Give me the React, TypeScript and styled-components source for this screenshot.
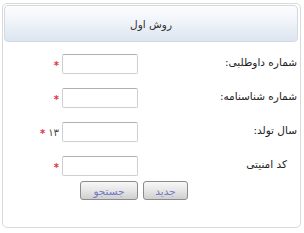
import React from 'react';
import styled, { createGlobalStyle } from 'styled-components';

const GlobalStyle = createGlobalStyle`
body {
    margin: 0;
    background: #ffffff;
    font-family: "DejaVu Sans", Tahoma, sans-serif;
}
`;

const Panel = styled.div`
direction: rtl;
box-sizing: border-box;
margin: 3px 0 0 2px;
width: 299px;
height: 225px;
border: 1px solid #d9d9d9;
border-radius: 5px;
padding: 1px 2px 0 1px;
`;

const Header = styled.div`
box-sizing: border-box;
height: 37px;
border: 1px solid #d3d9e1;
border-radius: 4px;
background: linear-gradient(to bottom, #fdfdfe 0%, #eef2f8 50%, #dce5f0 100%);
display: flex;
align-items: center;
justify-content: center;
`;

const Title = styled.span`
font-size: 10.5px;
color: #333333;
`;

const Form = styled.div`
padding-top: 12px;
display: flex;
flex-direction: column;
`;

const Row = styled.div`
display: grid;
grid-template-columns: 160px auto;
height: 34px;
`;

const Label = styled.span<{ indent?: number }>`
font-size: 10.5px;
color: #222222;
padding-top: 2px;
padding-right: ${(p) => 1 + (p.indent || 0)}px;
white-space: nowrap;
`;

const Field = styled.div`
display: flex;
align-items: center;
align-self: start;
height: 20px;
`;

const Input = styled.input`
box-sizing: border-box;
width: 76px;
height: 20px;
border: 1px solid #cfcfcf;
border-top-color: #b0b0b0;
border-radius: 2px;
background: #ffffff;
margin: 0;
padding: 0 3px;
font-size: 11px;
`;

const Hint = styled.span`
font-size: 10px;
color: #444444;
margin-right: 3px;
`;

const Star = styled.span`
color: #e0343e;
font-size: 10px;
font-weight: bold;
margin-right: 3px;
padding-top: 3px;
`;

const ButtonRow = styled.div`
display: flex;
gap: 5px;
padding-right: 110px;
margin-top: -9px;
`;

const Button = styled.button<{ w: number }>`
box-sizing: border-box;
width: ${(p) => p.w}px;
height: 19px;
padding: 0;
border: 1px solid #8c8c8c;
border-radius: 3px;
background: linear-gradient(to bottom, #f7f7f7 0%, #e6e6e6 50%, #cfcfcf 100%);
color: #6f7bc8;
font-family: "DejaVu Sans", Tahoma, sans-serif;
font-size: 10.5px;
`;

const rows = [
    { label: 'شماره داوطلبی:', hint: '' },
    { label: 'شماره شناسنامه:', hint: '' },
    { label: 'سال تولد:', hint: '۱۳' },
    { label: 'کد امنیتی', hint: '', indent: 10 },
];

const App: React.FunctionComponent = () => {
    return (
        <>
            <GlobalStyle />
            <Panel>
                <Header>
                    <Title>روش اول</Title>
                </Header>
                <Form>
                    {rows.map((r) => (
                        <Row key={r.label}>
                            <Label indent={r.indent}>{r.label}</Label>
                            <Field>
                                <Input type="text" />
                                {r.hint && <Hint>{r.hint}</Hint>}
                                <Star>*</Star>
                            </Field>
                        </Row>
                    ))}
                    <ButtonRow>
                        <Button w={45}>جدید</Button>
                        <Button w={58}>جستجو</Button>
                    </ButtonRow>
                </Form>
            </Panel>
        </>
    );
};

export default App;
